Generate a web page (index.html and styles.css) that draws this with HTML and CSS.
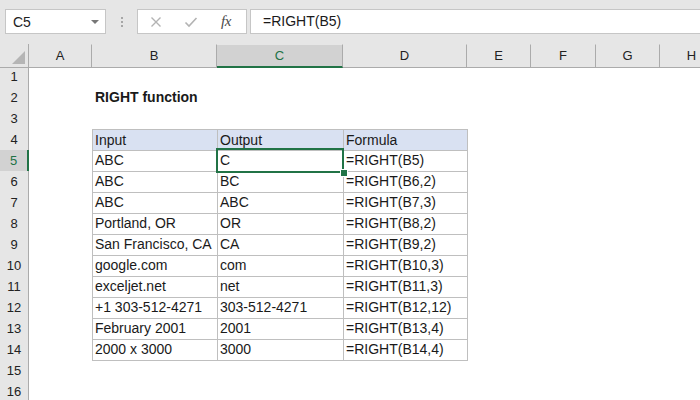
FILE: index.html
```html
<!DOCTYPE html>
<html>
<head>
<meta charset="utf-8">
<link rel="stylesheet" href="styles.css">
</head>
<body>
<div class="app">
  <div class="toolbar">
    <div class="namebox"><span class="ref">C5</span><span class="caret"></span></div>
    <div class="grip"><i></i><i></i><i></i></div>
    <div class="fxbox">
      <svg class="ico" width="12" height="12" viewBox="0 0 12 12"><path d="M1.5 1.5 L10.5 10.5 M10.5 1.5 L1.5 10.5" stroke="#b3b3b3" stroke-width="1.4" fill="none"/></svg>
      <svg class="ico" width="14" height="12" viewBox="0 0 14 12"><path d="M1.5 6.5 L5 10 L12.5 2" stroke="#b3b3b3" stroke-width="1.6" fill="none"/></svg>
      <span class="fx">fx</span>
    </div>
    <div class="formula">=RIGHT(B5)</div>
  </div>
  <div class="sheet">
    <div class="row head">
      <div class="corner"><span class="tri"></span></div>
      <div class="ch">A</div><div class="ch">B</div><div class="ch sel">C</div><div class="ch">D</div><div class="ch">E</div><div class="ch">F</div><div class="ch">G</div><div class="ch">H</div>
    </div>
    <div class="row"><div class="rh">1</div><div class="c"></div><div class="c"></div><div class="c"></div><div class="c"></div><div class="c"></div><div class="c"></div><div class="c"></div><div class="c"></div></div>
    <div class="row"><div class="rh">2</div><div class="c"></div><div class="c title">RIGHT function</div><div class="c"></div><div class="c"></div><div class="c"></div><div class="c"></div><div class="c"></div><div class="c"></div></div>
    <div class="row"><div class="rh">3</div><div class="c"></div><div class="c"></div><div class="c"></div><div class="c"></div><div class="c"></div><div class="c"></div><div class="c"></div><div class="c"></div></div>
    <div class="row"><div class="rh">4</div><div class="c"></div><div class="c t th">Input</div><div class="c t th">Output</div><div class="c t th">Formula</div><div class="c tend"></div><div class="c"></div><div class="c"></div><div class="c"></div></div>
    <div class="row"><div class="rh sel">5</div><div class="c"></div><div class="c t">ABC</div><div class="c t active">C<span class="selbox"></span><span class="handle"></span></div><div class="c t">=RIGHT(B5)</div><div class="c tend"></div><div class="c"></div><div class="c"></div><div class="c"></div></div>
    <div class="row"><div class="rh">6</div><div class="c"></div><div class="c t">ABC</div><div class="c t">BC</div><div class="c t">=RIGHT(B6,2)</div><div class="c tend"></div><div class="c"></div><div class="c"></div><div class="c"></div></div>
    <div class="row"><div class="rh">7</div><div class="c"></div><div class="c t">ABC</div><div class="c t">ABC</div><div class="c t">=RIGHT(B7,3)</div><div class="c tend"></div><div class="c"></div><div class="c"></div><div class="c"></div></div>
    <div class="row"><div class="rh">8</div><div class="c"></div><div class="c t">Portland, OR</div><div class="c t">OR</div><div class="c t">=RIGHT(B8,2)</div><div class="c tend"></div><div class="c"></div><div class="c"></div><div class="c"></div></div>
    <div class="row"><div class="rh">9</div><div class="c"></div><div class="c t">San Francisco, CA</div><div class="c t">CA</div><div class="c t">=RIGHT(B9,2)</div><div class="c tend"></div><div class="c"></div><div class="c"></div><div class="c"></div></div>
    <div class="row"><div class="rh">10</div><div class="c"></div><div class="c t">google.com</div><div class="c t">com</div><div class="c t">=RIGHT(B10,3)</div><div class="c tend"></div><div class="c"></div><div class="c"></div><div class="c"></div></div>
    <div class="row"><div class="rh">11</div><div class="c"></div><div class="c t">exceljet.net</div><div class="c t">net</div><div class="c t">=RIGHT(B11,3)</div><div class="c tend"></div><div class="c"></div><div class="c"></div><div class="c"></div></div>
    <div class="row"><div class="rh">12</div><div class="c"></div><div class="c t">+1 303-512-4271</div><div class="c t">303-512-4271</div><div class="c t">=RIGHT(B12,12)</div><div class="c tend"></div><div class="c"></div><div class="c"></div><div class="c"></div></div>
    <div class="row"><div class="rh">13</div><div class="c"></div><div class="c t">February 2001</div><div class="c t">2001</div><div class="c t">=RIGHT(B13,4)</div><div class="c tend"></div><div class="c"></div><div class="c"></div><div class="c"></div></div>
    <div class="row"><div class="rh">14</div><div class="c"></div><div class="c t">2000 x 3000</div><div class="c t">3000</div><div class="c t">=RIGHT(B14,4)</div><div class="c tend"></div><div class="c"></div><div class="c"></div><div class="c"></div></div>
    <div class="row"><div class="rh">15</div><div class="c"></div><div class="c"></div><div class="c"></div><div class="c"></div><div class="c"></div><div class="c"></div><div class="c"></div><div class="c"></div></div>
    <div class="row"><div class="rh">16</div><div class="c"></div><div class="c"></div><div class="c"></div><div class="c"></div><div class="c"></div><div class="c"></div><div class="c"></div><div class="c"></div></div>
  </div>
</div>
</body>
</html>
```

FILE: styles.css
```css
* { box-sizing: border-box; }
html, body { margin: 0; padding: 0; }
body {
  width: 700px;
  height: 400px;
  overflow: hidden;
  background: #ffffff;
  font-family: "Liberation Sans", Arial, sans-serif;
  color: #1a1a1a;
}
.app { width: 700px; }

/* ---------- toolbar ---------- */
.toolbar {
  height: 44px;
  background: #e6e6e6;
  display: flex;
  align-items: flex-start;
  padding: 9px 0 0 5px;
}
.namebox {
  width: 101px;
  height: 25px;
  background: #fff;
  border: 1px solid #c6c6c6;
  display: flex;
  align-items: center;
  justify-content: space-between;
  padding: 0 6px 0 7px;
  font-size: 14px;
  color: #222;
}
.caret {
  width: 0; height: 0;
  border-left: 4px solid transparent;
  border-right: 4px solid transparent;
  border-top: 4px solid #777;
}
.grip {
  width: 31px;
  height: 25px;
  display: flex;
  flex-direction: column;
  align-items: center;
  justify-content: center;
  gap: 2px;
}
.grip i {
  display: block;
  width: 2px;
  height: 2px;
  background: #a6a6a6;
}
.fxbox {
  width: 110px;
  height: 25px;
  background: #fff;
  border: 1px solid #c6c6c6;
  display: flex;
  align-items: center;
  padding-left: 12px;
  gap: 0;
}
.fxbox .ico:first-child { margin-right: 22px; }
.fxbox .ico:nth-child(2) { margin-right: 23px; }
.fx {
  font-family: "Liberation Serif", "Times New Roman", serif;
  font-style: italic;
  font-size: 15px;
  color: #4a4a4a;
  letter-spacing: -0.5px;
}
.formula {
  flex: 1;
  margin-left: 3px;
  height: 25px;
  background: #fff;
  border: 1px solid #c6c6c6;
  border-right: none;
  padding-left: 12px;
  font-size: 14px;
  line-height: 23px;
  color: #1a1a1a;
}

/* ---------- sheet ---------- */
.sheet { width: 724px; }
.row {
  display: grid;
  grid-template-columns: 29px 63px 125px 126px 124px 64px 65px 64px 64px;
  height: 21px;
}
.row.head { height: 22px; }
.corner {
  background: #e6e6e6;
  border-right: 1px solid #ababab;
  border-bottom: 1px solid #ababab;
  position: relative;
}
.tri {
  position: absolute;
  right: 3px;
  bottom: 3px;
  width: 0; height: 0;
  border-left: 13px solid transparent;
  border-bottom: 13px solid #b5b5b5;
}
.ch {
  background: #e6e6e6;
  border-bottom: 1px solid #ababab;
  border-right: 1px solid #ababab;
  border-top: 1px solid #e6e6e6;
  text-align: center;
  font-size: 13px;
  line-height: 20px;
  padding-top: 1px;
  color: #222;
}
.ch.sel {
  background: #d2d2d2;
  color: #217346;
  border-bottom: 2px solid #217346;
}
.rh {
  background: #e6e6e6;
  border-right: 1px solid #ababab;
  border-bottom: 1px solid #d0d0d0;
  text-align: center;
  font-size: 13px;
  line-height: 20px;
  padding-top: 1px;
  color: #222;
}
.rh.sel {
  background: #d2d2d2;
  color: #217346;
  border-right: 2px solid #217346;
}
.c {
  font-size: 14px;
  line-height: 19px;
  padding: 1px 0 0 3px;
  white-space: nowrap;
  overflow: visible;
  color: #1a1a1a;
}
.c.title { font-weight: bold; }
.c.t {
  border-left: 1px solid #bfbfbf;
  border-bottom: 1px solid #bfbfbf;
  padding-left: 2px;
}
.c.th {
  background: #d9e1f2;
  border-top: 1px solid #bfbfbf;
}
.c.tend { border-left: 1px solid #bfbfbf; }
.c.active { position: relative; }
.selbox {
  position: absolute;
  left: -2px;
  top: -2px;
  right: -1px;
  bottom: -2px;
  border: 2px solid #217346;
  pointer-events: none;
}
.handle {
  position: absolute;
  right: -4px;
  bottom: -5px;
  width: 6px;
  height: 6px;
  background: #217346;
  border: 1px solid #fff;
  box-sizing: content-box;
  margin: -1px;
}
```
